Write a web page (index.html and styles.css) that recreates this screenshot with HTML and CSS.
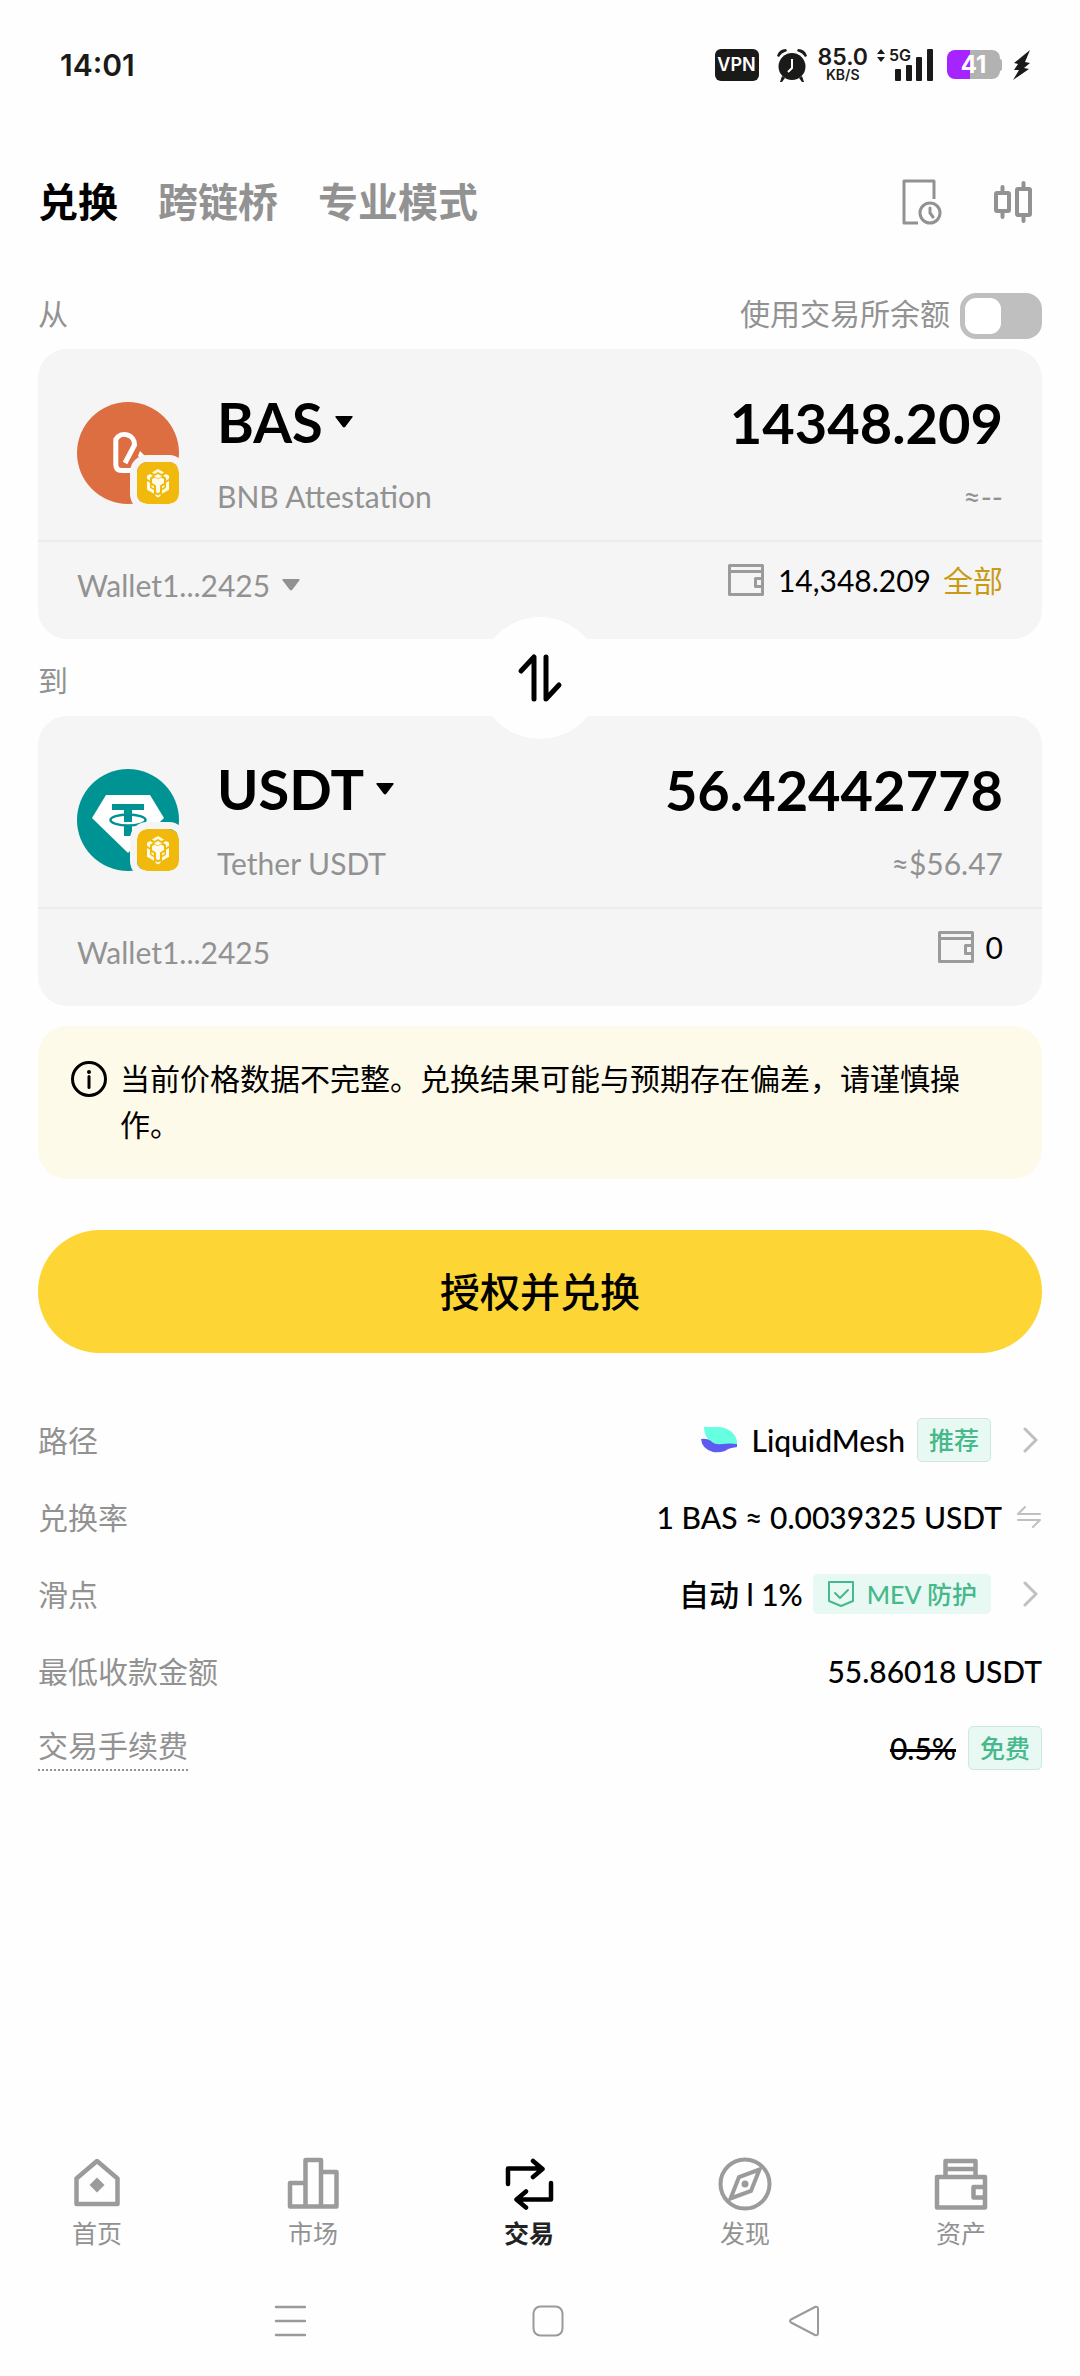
FILE: index.html
```html
<!DOCTYPE html>
<html lang="zh-CN">
<head>
<meta charset="utf-8">
<meta name="viewport" content="width=device-width, initial-scale=1">
<title>兑换</title>
<link rel="stylesheet" href="styles.css">
</head>
<body>
<svg class="sprite" aria-hidden="true">
  <symbol id="caret" viewBox="0 0 18 12"><path d="M1.500 0h15q2 0 .8 1.600l-7 9.200q-1.300 1.500-2.600 0l-7-9.200q-1.200-1.600.8-1.600z" fill="currentColor"/></symbol>
  <symbol id="chevron" viewBox="0 0 16 26"><path d="M2 2l11 11L2 24" fill="none" stroke="currentColor" stroke-width="3" stroke-linecap="round" stroke-linejoin="round"/></symbol>
  <symbol id="wallet" viewBox="0 0 36 32"><g fill="none" stroke="currentColor" stroke-width="3" stroke-linejoin="round"><path d="M1.500 1.500h33v29h-33zM1.500 7.500h33"/><path d="M34.500 14.500h-7v8h7"/></g></symbol>
  <symbol id="bnb" viewBox="0 0 42 42">
    <rect width="42" height="42" rx="10" fill="#f0b90b"/>
    <g fill="#fffbe6">
      <path d="M21 7l6 3.500-2.500 1.500L21 10l-3.500 2-2.500-1.500z"/>
      <path d="M21 12l4 2.300-4 2.300-4-2.300z"/>
      <path d="M13 12l3 1.700-3 2v3l-3-2v-3zM29 12l-3 1.700 3 2v3l3-2v-3z"/>
      <path d="M15 17l3-1.500 3 1.700 3-1.700 3 1.500v4l-4 2.500V30l-2 1.200-2-1.200v-6.500L15 21z"/>
      <path d="M10 19l3 1.800v5l4 2.400v3.500l-7-4zM32 19l-3 1.800v5l-4 2.400v3.500l7-4z"/>
      <path d="M14.500 23l2.500 1.500v2L14.500 25zM27.500 23L25 24.500v2l2.500-1.500z"/>
      <path d="M18.500 32l2.500 1.500 2.500-1.500v2L21 35.500 18.500 34z"/>
    </g>
  </symbol>
</svg>

<div class="app">
  <div class="status">
    <span class="clock">14:01</span>
    <div class="status-icons">
      <span class="vpn">VPN</span>
      <svg class="alarm" width="32" height="34" viewBox="0 0 32 34"><g fill="#1a1a18"><circle cx="16" cy="18.500" r="13.500"/><path d="M1 8Q3 1 10 1l1 2Q5 5 3 9zM31 8Q29 1 22 1l-1 2q6 2 8 6z"/><path d="M6 28l3 2-3 4H4zM26 28l-3 2 3 4h2z"/></g><path d="M16 11v9l-4 4" fill="none" stroke="#fff" stroke-width="2"/></svg>
      <span class="speed"><b>85.0</b><small>KB/S</small></span>
      <div class="signal">
        <svg width="58" height="34" viewBox="0 0 58 34" fill="#1a1a18"><path d="M5 1l4 5H1zM5 14l4-5H1z"/><rect x="19" y="21" width="6" height="12" rx="1"/><rect x="30" y="17" width="6" height="16" rx="1"/><rect x="40" y="9" width="6" height="24" rx="1"/><rect x="51" y="1" width="6" height="32" rx="1"/></svg>
        <span class="net">5G</span>
      </div>
      <span class="battery"><span class="battery-body">41</span><span class="battery-tip"></span></span>
      <svg class="bolt" width="20" height="32" viewBox="0 0 20 32"><path d="M18 1L2 14l4 1-4 6h5L1 31l16-11-5-1 6-5-5-1z" fill="#1a1a18"/></svg>
    </div>
  </div>

  <header class="topbar">
    <nav class="tabs">
      <button class="tab active" type="button">兑换</button>
      <button class="tab" type="button">跨链桥</button>
      <button class="tab" type="button">专业模式</button>
    </nav>
    <div class="tools">
      <button class="plain" type="button" aria-label="订单记录"><svg width="42" height="48" viewBox="0 0 42 48" fill="none" stroke="#929292" stroke-width="3"><path d="M33 21V3H3v42h14" stroke-linejoin="round"/><circle cx="29" cy="35" r="10"/><path d="M29 30v5l3 4" stroke-linecap="round"/></svg></button>
      <button class="plain" type="button" aria-label="K线"><svg width="40" height="42" viewBox="0 0 40 42" fill="none" stroke="#929292" stroke-width="4" stroke-linecap="round"><rect x="3" y="12" width="13" height="18" rx="1"/><path d="M9.500 6v5M9.500 31v5"/><rect x="24" y="8" width="13" height="26" rx="1"/><path d="M30.500 2v5M30.500 35v5"/></svg></button>
    </div>
  </header>

  <main class="content">
    <div class="from-row">
      <label for="amount">从</label>
      <label class="balance-switch">使用交易所余额<input type="checkbox" class="switch"></label>
    </div>

    <section class="card">
      <div class="card-main">
        <div class="token">
          <svg width="102" height="102" viewBox="0 0 102 102"><circle cx="51" cy="51" r="51" fill="#dd6e42"/><path d="M48 61l9.500-18a10 10 0 0 0-18.700-5.500v25q0 6 6 6h14" fill="none" stroke="#fff" stroke-width="5" stroke-linejoin="round"/><path d="M63 49l7 7-4 3-5-5z" fill="#fff"/></svg>
          <svg class="chain" width="42" height="42"><use href="#bnb"/></svg>
        </div>
        <div class="names">
          <button class="symbol" type="button">BAS<svg width="18" height="12"><use href="#caret"/></svg></button>
          <span class="sub">BNB Attestation</span>
        </div>
        <div class="amounts">
          <input id="amount" class="amount" type="text" inputmode="decimal" value="14348.209">
          <span class="sub">≈--</span>
        </div>
      </div>
      <div class="card-foot">
        <button class="account" type="button">Wallet1...2425<svg width="18" height="12"><use href="#caret"/></svg></button>
        <div class="balance"><svg width="36" height="32"><use href="#wallet"/></svg><span class="available">14,348.209</span><button class="all" type="button">全部</button></div>
      </div>
    </section>

    <div class="to-row">
      <label for="receive">到</label>
      <button class="swap" type="button" aria-label="互换"><svg width="46" height="50" viewBox="0 0 46 50" fill="none" stroke="#000" stroke-width="5" stroke-linecap="round" stroke-linejoin="round"><path d="M4 18L17 4v42M29 4v42l13-14"/></svg></button>
    </div>

    <section class="card">
      <div class="card-main">
        <div class="token">
          <svg width="102" height="102" viewBox="0 0 102 102"><circle cx="51" cy="51" r="51" fill="#009393"/><path d="M29 26h44l14 23-36 35-36-35z" fill="#fff"/><g fill="#009393"><path d="M35 35h32v6H55v5.500h-8V41H35z"/><path d="M47 46h8v7h-8zM47 57h8v10h-8z"/></g><ellipse cx="51" cy="51" rx="17.500" ry="5.500" fill="none" stroke="#009393" stroke-width="2.500"/></svg>
          <svg class="chain" width="42" height="42"><use href="#bnb"/></svg>
        </div>
        <div class="names">
          <button class="symbol" type="button">USDT<svg width="18" height="12"><use href="#caret"/></svg></button>
          <span class="sub">Tether USDT</span>
        </div>
        <div class="amounts">
          <input id="receive" class="amount" type="text" value="56.42442778" readonly>
          <span class="sub">≈$56.47</span>
        </div>
      </div>
      <div class="card-foot">
        <span class="account">Wallet1...2425</span>
        <div class="balance tight"><svg width="36" height="32"><use href="#wallet"/></svg><span class="available">0</span></div>
      </div>
    </section>

    <div class="notice" role="note">
      <svg width="38" height="46" viewBox="0 0 38 46"><circle cx="19" cy="24" r="16.500" fill="none" stroke="#000" stroke-width="3"/><circle cx="19" cy="17" r="2" fill="#000"/><path d="M19 21.500v11" stroke="#000" stroke-width="3" stroke-linecap="round"/></svg>
      <p>当前价格数据不完整。兑换结果可能与预期存在偏差，请谨慎操作。</p>
    </div>

    <button class="submit" type="button">授权并兑换</button>

    <dl class="details">
      <div class="row">
        <dt>路径</dt>
        <dd>
          <svg class="route" width="36" height="28" viewBox="0 0 36 28"><path d="M3 1h16q14 2 17 14v4q-13 2-21-1Q3 14 3 1z" fill="#66ffe0"/><path d="M0 13q7-1 11 3 4 3 10 2 8-1 15 0v3q-9 1-12 4-6 2-12 1Q1 23 0 13z" fill="#5e5cf0"/></svg>
          <span>LiquidMesh</span><span class="tag">推荐</span>
          <button class="plain more" type="button" aria-label="选择路径"><svg width="16" height="26"><use href="#chevron"/></svg></button>
        </dd>
      </div>
      <div class="row">
        <dt>兑换率</dt>
        <dd><span>1 BAS ≈ 0.0039325 USDT</span><button class="plain invert" type="button" aria-label="反转汇率"><svg width="26" height="24" viewBox="0 0 26 24" fill="none" stroke="#c0c0c0" stroke-width="2" stroke-linecap="round" stroke-linejoin="round"><path d="M9 2L2 9h22M2 15h22l-7 7"/></svg></button></dd>
      </div>
      <div class="row">
        <dt>滑点</dt>
        <dd>
          <span>自动 l 1%</span>
          <span class="tag mev"><svg width="28" height="28" viewBox="0 0 28 28" fill="none" stroke="#46b98c" stroke-width="2" stroke-linejoin="round"><path d="M2 2h24v19l-12 5-12-5z"/><path d="M8 13l5 5 8-8" stroke-linecap="round"/></svg>MEV 防护</span>
          <button class="plain more" type="button" aria-label="设置滑点"><svg width="16" height="26"><use href="#chevron"/></svg></button>
        </dd>
      </div>
      <div class="row">
        <dt>最低收款金额</dt>
        <dd>55.86018 USDT</dd>
      </div>
      <div class="row">
        <dt class="hint">交易手续费</dt>
        <dd><s>0.5%</s><span class="tag">免费</span></dd>
      </div>
    </dl>
  </main>

  <nav class="bottom-nav">
    <a href="#home"><svg width="54" height="54" viewBox="0 0 54 54" fill="none" stroke="#9b9b9b" stroke-width="4.500" stroke-linejoin="round"><path d="M27 4L6.500 21.500V47h41V21.500z"/><path d="M27 20.500l7.500 7.500-7.500 7.500-7.500-7.500z" fill="#9b9b9b" stroke="none"/></svg>首页</a>
    <a href="#market"><svg width="54" height="54" viewBox="0 0 54 54" fill="none" stroke="#9b9b9b" stroke-width="4.500" stroke-linejoin="round"><path d="M4 49.500V26h15.500V3H35v12h15.500v34.500zM19.500 26v23.500M35 15v34.500"/></svg>市场</a>
    <a href="#trade" class="current"><svg width="54" height="54" viewBox="0 0 54 54" fill="none" stroke="#000" stroke-width="4.500" stroke-linecap="round" stroke-linejoin="round"><path d="M6 27V11.500h33M31 4l9.500 8L31 20M49 26v16.500H16M24 34.500l-9.500 8 9.500 8"/></svg>交易</a>
    <a href="#discover"><svg width="54" height="54" viewBox="0 0 54 54" fill="none" stroke="#9b9b9b" stroke-width="4"><circle cx="27" cy="27" r="24.500"/><path d="M41.500 12.500L33 34 12.500 41.500 21 20z"/><circle cx="27" cy="27" r="3.500" fill="#9b9b9b" stroke="none"/></svg>发现</a>
    <a href="#assets"><svg width="54" height="54" viewBox="0 0 54 54" fill="none" stroke="#9b9b9b" stroke-width="4.500" stroke-linejoin="round"><path d="M3 20h48v30.500H3zM11.500 20V4h30v16M11.500 12h30"/><path d="M51 30H39.500v10.500H51"/></svg>资产</a>
  </nav>

  <div class="system-nav">
    <button class="plain" type="button" aria-label="最近任务"><svg width="32" height="34" viewBox="0 0 32 34" stroke="#9a9a9a" stroke-width="2.500" stroke-linecap="round"><path d="M2 3h29M2 17h29M2 31h29"/></svg></button>
    <button class="plain" type="button" aria-label="主屏幕"><svg width="32" height="34" viewBox="0 0 32 34" fill="none" stroke="#9a9a9a" stroke-width="2"><rect x="1.500" y="2.500" width="29" height="29" rx="7"/></svg></button>
    <button class="plain" type="button" aria-label="返回"><svg width="32" height="34" viewBox="0 0 32 34" fill="none" stroke="#9a9a9a" stroke-width="2" stroke-linejoin="round"><path d="M2 15.500L26 3q3-1 3 2v24q0 3-3 2L2 18.500q-2-1.500 0-3z"/></svg></button>
  </div>
</div>
</body>
</html>
```
FILE: styles.css
```css
* { box-sizing: border-box; }

body {
  margin: 0;
  background: #fefefe;
  color: #000;
  font-family: Lato, "Noto Sans CJK SC", sans-serif;
  font-size: 30px;
  line-height: 40px;
}

button {
  padding: 0;
  border: 0;
  background: none;
  color: inherit;
  font: inherit;
}

svg { display: block; flex: none; }
.sprite { position: absolute; width: 0; height: 0; }
.plain { display: flex; align-items: center; }

.app {
  display: flex;
  flex-direction: column;
  min-height: 100vh;
}

/* Status bar */
.status {
  display: flex;
  align-items: center;
  justify-content: space-between;
  height: 129px;
  padding: 0 48px 0 60px;
  color: #1a1a18;
  font-family: Inter, sans-serif;
}
.clock { font-size: 30px; font-weight: 600; }
.status-icons { display: flex; align-items: center; }
.vpn {
  width: 44px;
  border-radius: 6px;
  background: #1a1a18;
  color: #fff;
  font-size: 18px;
  font-weight: 600;
  line-height: 32px;
  text-align: center;
}
.alarm { margin-left: 17px; }
.speed {
  display: flex;
  flex-direction: column;
  align-items: center;
  margin-left: 10px;
}
.speed b { font-size: 23px; font-weight: 600; line-height: 20px; }
.speed small { font-size: 14px; font-weight: 600; line-height: 16px; }
.signal { position: relative; margin-left: 8px; }
.net {
  position: absolute;
  top: 0;
  left: 13px;
  background: #fefefe;
  font-size: 16px;
  font-weight: 600;
  line-height: 15px;
}
.battery { display: flex; align-items: center; margin-left: 13px; }
.battery-body {
  width: 53px;
  border-radius: 8px;
  background: linear-gradient(90deg, #a524ff 43%, #b2b2b2 43%);
  color: #fff;
  font-size: 24px;
  font-weight: 700;
  line-height: 29px;
  text-align: center;
}
.battery-tip { width: 2px; height: 12px; border-radius: 0 2px 2px 0; background: #b2b2b2; }
.bolt { margin-left: 10px; }

/* Header */
.topbar {
  display: flex;
  align-items: center;
  justify-content: space-between;
  height: 146px;
  padding: 0 47px 0 38px;
}
.tabs { display: flex; gap: 40px; }
.tab {
  color: #929292;
  font-size: 40px;
  font-weight: 700;
  line-height: 60px;
}
.tab.active { color: #000; }
.tools { display: flex; align-items: center; gap: 50px; }

.content { padding: 0 38px; }

.from-row {
  display: flex;
  align-items: flex-start;
  justify-content: space-between;
  height: 74px;
  padding-top: 18px;
  color: #929292;
}
.balance-switch { display: flex; align-items: flex-start; gap: 10px; }
.switch {
  appearance: none;
  width: 82px;
  height: 46px;
  margin: 0;
  padding: 5px;
  border-radius: 16px;
  background: #bfbfbf;
}
.switch::before {
  content: "";
  display: block;
  width: 36px;
  height: 36px;
  border-radius: 11px;
  background: #fff;
}

/* Token cards */
.card { border-radius: 29px; background: #f5f5f5; }
.card-main {
  display: flex;
  align-items: flex-start;
  padding: 40px 39px 24px;
  border-bottom: 2px solid #ececec;
}
.token { position: relative; margin-top: 13px; }
.chain {
  position: absolute;
  right: -7px;
  bottom: -7px;
  box-sizing: content-box;
  border: 7px solid #f5f5f5;
  border-radius: 17px;
}
.names {
  display: flex;
  flex: none;
  flex-direction: column;
  align-items: flex-start;
  gap: 21px;
  margin-left: 38px;
}
.symbol {
  display: flex;
  align-items: center;
  gap: 12px;
  font-size: 56px;
  font-weight: 700;
  line-height: 66px;
}
.amounts {
  display: flex;
  flex: 1;
  flex-direction: column;
  gap: 21px;
  min-width: 0;
  text-align: right;
}
.amount {
  width: 100%;
  height: 66px;
  padding: 0;
  border: 0;
  background: none;
  color: #000;
  font: inherit;
  font-size: 56px;
  font-weight: 700;
  text-align: right;
}
.sub { color: #929292; }
.card-foot {
  display: flex;
  align-items: center;
  justify-content: space-between;
  height: 97px;
  padding: 0 39px 12px;
}
.account { display: flex; align-items: center; gap: 12px; color: #929292; }
.balance { display: flex; align-items: center; padding-bottom: 10px; color: #9b9b9b; }
.available { margin-left: 14px; color: #000; }
.tight .available { margin-left: 12px; }
.all { margin-left: 12px; color: #c99a16; }

.to-row {
  display: flex;
  position: relative;
  align-items: center;
  justify-content: space-between;
  height: 77px;
  padding-top: 4px;
  color: #929292;
}
.swap {
  display: flex;
  position: absolute;
  top: 50%;
  left: 50%;
  align-items: center;
  justify-content: center;
  width: 122px;
  height: 122px;
  margin: -61px 0 0 -61px;
  border-radius: 50%;
  background: #fefefe;
}

.notice {
  display: flex;
  gap: 12px;
  margin-top: 20px;
  padding: 29px 60px 32px 32px;
  border-radius: 29px;
  background: #fefaea;
  line-height: 46px;
}
.notice p { margin: 0; }

.submit {
  width: 100%;
  height: 123px;
  margin-top: 51px;
  border-radius: 62px;
  background: #fdd535;
  font-size: 40px;
  font-weight: 500;
}

/* Quote details */
.details { margin: 48px 0 0; }
.row {
  display: flex;
  align-items: center;
  justify-content: space-between;
  height: 77px;
}
dt { color: #929292; }
.hint { padding-bottom: 4px; border-bottom: 2px dotted #929292; }
dd {
  display: flex;
  align-items: center;
  margin: 0;
  font-weight: 500;
}
.route { margin-right: 14px; }
.tag {
  margin-left: 12px;
  padding: 0 11px;
  border: 1px solid #cbe9dc;
  border-radius: 5px;
  background: #e8f8f2;
  color: #46b98c;
  font-size: 25px;
  line-height: 42px;
}
.mev {
  display: flex;
  align-items: center;
  gap: 12px;
  margin-left: 10px;
  padding: 0 14px;
  border: 0;
  line-height: 40px;
}
.more { justify-content: flex-end; width: 51px; padding-right: 3px; color: #c0c0c0; }
.invert { margin-left: 14px; }

/* Bottom bars */
.bottom-nav {
  display: flex;
  justify-content: space-between;
  margin-top: auto;
  padding: 0 92px 0 70px;
}
.bottom-nav a {
  display: flex;
  flex-direction: column;
  align-items: center;
  color: #929292;
  font-size: 25px;
  line-height: 44px;
  text-decoration: none;
}
.bottom-nav .current { color: #222; font-weight: 700; }
.system-nav {
  display: flex;
  justify-content: space-between;
  padding: 49px 259px 38px 274px;
}
```
